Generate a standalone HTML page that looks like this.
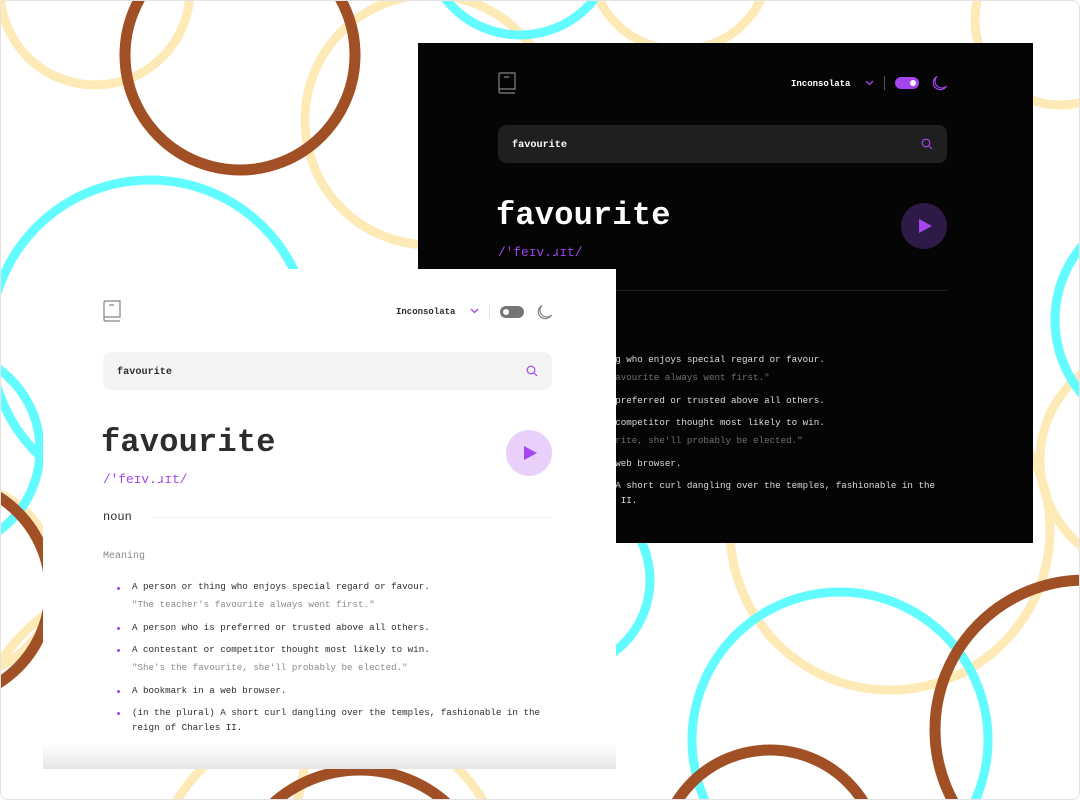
<!DOCTYPE html>
<html><head><meta charset="utf-8"><style>
*{margin:0;padding:0;box-sizing:border-box}
body{width:1080px;height:800px;overflow:hidden;background:#fff;position:relative;font-family:"Liberation Mono",monospace}
.bg{position:absolute;left:0;top:0}
.card{position:absolute;overflow:hidden}
.light{left:43px;top:269px;width:573px;height:500px;background:#fff}
.light:after{content:"";position:absolute;left:0;right:0;bottom:0;height:26px;background:linear-gradient(#fff,#e6e6e6)}
.dark{left:418px;top:43px;width:615px;height:500px;background:#050505}
.c{position:absolute;top:0;width:449px;height:500px}
.light .c{left:60px}
.dark .c{left:80px;top:-1px}
.a{position:absolute;white-space:nowrap}
.font{left:293px;top:37px;font-size:9px;font-weight:bold;color:#2d2d2d}
.dark .font{color:#fff}
.sb{left:0;top:83px;width:449px;height:38px;border-radius:8px;background:#f4f4f4}
.dark .sb{background:#1f1f1f}
.st{left:14px;top:98px;font-size:10.2px;font-weight:bold;color:#2d2d2d}
.dark .st{color:#fff}
.title{left:-2px;top:155px;font-size:32px;font-weight:bold;color:#2d2d2d;letter-spacing:.2px}
.dark .title{color:#fff}
.ph{left:0;top:203px;font-size:12.8px;color:#a445ed}
.play{left:403px;top:161px;width:46px;height:46px;border-radius:50%;background:#e9d0fa}
.dark .play{background:#2e1a47}
.play:after{content:"";position:absolute;left:18px;top:16px;border-left:13px solid #a445ed;border-top:7px solid transparent;border-bottom:7px solid transparent}
.noun{left:0;top:241px;font-size:12px;color:#2d2d2d}
.hr{left:49px;top:248px;width:400px;height:1px;background:#eee}
.dark .hr{background:#222}
.mean{left:0;top:282px;font-size:10px;color:#8a8a8a}
.li{left:29px;font-size:9.2px;color:#2d2d2d}
.dark .li{color:#ddd}
.ex{left:29px;font-size:9.2px;color:#8a8a8a}
.dark .ex{color:#707070}
.dot{left:14px;width:3px;height:3px;border-radius:50%;background:#a445ed}
</style></head><body>
<svg class="bg" width="1080" height="800" fill="none" stroke-linecap="round">
<g stroke="#fdeab6" stroke-width="9">
<circle cx="95" cy="-10" r="95"/>
<circle cx="430" cy="120" r="125"/>
<circle cx="1060" cy="20" r="85"/>
<circle cx="1150" cy="460" r="110"/>
<circle cx="890" cy="530" r="160"/>
<circle cx="140" cy="750" r="165"/>
<circle cx="-40" cy="580" r="95"/>
<circle cx="330" cy="895" r="180"/>
<circle cx="680" cy="-40" r="90"/>
</g>
<g stroke="#62fbff" stroke-width="9">
<circle cx="150" cy="340" r="160"/>
<circle cx="520" cy="-60" r="95"/>
<circle cx="1170" cy="320" r="115"/>
<circle cx="840" cy="740" r="148"/>
<circle cx="560" cy="580" r="90"/>
<circle cx="-60" cy="450" r="100"/>
</g>
<g stroke="#a05024" stroke-width="11">
<circle cx="240" cy="55" r="115"/>
<circle cx="1085" cy="730" r="150"/>
<circle cx="360" cy="900" r="130"/>
<circle cx="770" cy="860" r="110"/>
<circle cx="-60" cy="590" r="110"/>
</g>
</svg>

<div class="card dark">
 <div class="c">
  <svg class="a" style="left:0;top:30px" width="18" height="22" fill="none" stroke="#838383" stroke-width="1.2"><path d="M1 20V2.5Q1 1 2.5 1H17V17H2.5Q1 17 1 18.5M1 19.5Q1 21 2.5 21H17M6 5H11"/></svg>
  <div class="a font">Inconsolata</div>
  <svg class="a" style="left:367px;top:38px" width="9" height="6" fill="none" stroke="#a445ed" stroke-width="1.3"><path d="M1 1L4.5 4.5L8 1"/></svg>
  <div class="a" style="left:386px;top:34px;width:1px;height:14px;background:#555"></div>
  <div class="a" style="left:397px;top:35px;width:24px;height:12px;border-radius:6px;background:#a445ed"><div style="position:absolute;right:3px;top:3px;width:6px;height:6px;border-radius:50%;background:#fff"></div></div>
  <svg class="a" style="left:434px;top:33px" width="16" height="16" fill="none" stroke="#a445ed" stroke-width="1.2"><path d="M5 1.5A7 7 0 1 0 14.5 11A6 6 0 0 1 5 1.5Z"/></svg>
  <div class="a sb"></div>
  <div class="a st">favourite</div>
  <svg class="a" style="left:423px;top:96px" width="12" height="12" fill="none" stroke="#a445ed" stroke-width="1.2"><circle cx="5" cy="5" r="3.8"/><path d="M8 8L11 11"/></svg>
  <div class="a title">favourite</div>
  <div class="a ph">/'feɪv.ɹɪt/</div>
  <div class="a play"></div>
  <div class="a hr"></div>
  <div class="a dot" style="top:318px"></div><div class="a li" style="top:312px">A person or thing who enjoys special regard or favour.</div>
  <div class="a ex" style="top:330px">"The teacher's favourite always went first."</div>
  <div class="a dot" style="top:358px"></div><div class="a li" style="top:353px">A person who is preferred or trusted above all others.</div>
  <div class="a dot" style="top:380px"></div><div class="a li" style="top:375px">A contestant or competitor thought most likely to win.</div>
  <div class="a ex" style="top:393px">"She's the favourite, she'll probably be elected."</div>
  <div class="a dot" style="top:421px"></div><div class="a li" style="top:416px">A bookmark in a web browser.</div>
  <div class="a dot" style="top:443px"></div><div class="a li" style="top:438px">(in the plural) A short curl dangling over the temples, fashionable in the</div>
  <div class="a li" style="top:453px">reign of Charles II.</div>
 </div>
</div>

<div class="card light">
 <div class="c">
  <svg class="a" style="left:0;top:31px" width="18" height="22" fill="none" stroke="#838383" stroke-width="1.2"><path d="M1 20V2.5Q1 1 2.5 1H17V17H2.5Q1 17 1 18.5M1 19.5Q1 21 2.5 21H17M6 5H11"/></svg>
  <div class="a font" style="top:38px">Inconsolata</div>
  <svg class="a" style="left:367px;top:39px" width="9" height="6" fill="none" stroke="#a445ed" stroke-width="1.3"><path d="M1 1L4.5 4.5L8 1"/></svg>
  <div class="a" style="left:386px;top:35px;width:1px;height:14px;background:#e5e5e5"></div>
  <div class="a" style="left:397px;top:37px;width:24px;height:12px;border-radius:6px;background:#757575"><div style="position:absolute;left:3px;top:3px;width:6px;height:6px;border-radius:50%;background:#fff"></div></div>
  <svg class="a" style="left:434px;top:35px" width="16" height="16" fill="none" stroke="#838383" stroke-width="1.2"><path d="M5 1.5A7 7 0 1 0 14.5 11A6 6 0 0 1 5 1.5Z"/></svg>
  <div class="a sb"></div>
  <div class="a st">favourite</div>
  <svg class="a" style="left:423px;top:96px" width="12" height="12" fill="none" stroke="#a445ed" stroke-width="1.2"><circle cx="5" cy="5" r="3.8"/><path d="M8 8L11 11"/></svg>
  <div class="a title">favourite</div>
  <div class="a ph">/'feɪv.ɹɪt/</div>
  <div class="a play"></div>
  <div class="a noun">noun</div>
  <div class="a hr"></div>
  <div class="a mean">Meaning</div>
  <div class="a dot" style="top:318px"></div><div class="a li" style="top:312px">A person or thing who enjoys special regard or favour.</div>
  <div class="a ex" style="top:330px">"The teacher's favourite always went first."</div>
  <div class="a dot" style="top:358px"></div><div class="a li" style="top:353px">A person who is preferred or trusted above all others.</div>
  <div class="a dot" style="top:380px"></div><div class="a li" style="top:375px">A contestant or competitor thought most likely to win.</div>
  <div class="a ex" style="top:393px">"She's the favourite, she'll probably be elected."</div>
  <div class="a dot" style="top:421px"></div><div class="a li" style="top:416px">A bookmark in a web browser.</div>
  <div class="a dot" style="top:443px"></div><div class="a li" style="top:438px">(in the plural) A short curl dangling over the temples, fashionable in the</div>
  <div class="a li" style="top:453px">reign of Charles II.</div>
 </div>
</div>
<div style="position:absolute;left:0;top:0;width:1080px;height:800px;border:1px solid #e3e3e3;border-radius:8px"></div>
</body></html>
